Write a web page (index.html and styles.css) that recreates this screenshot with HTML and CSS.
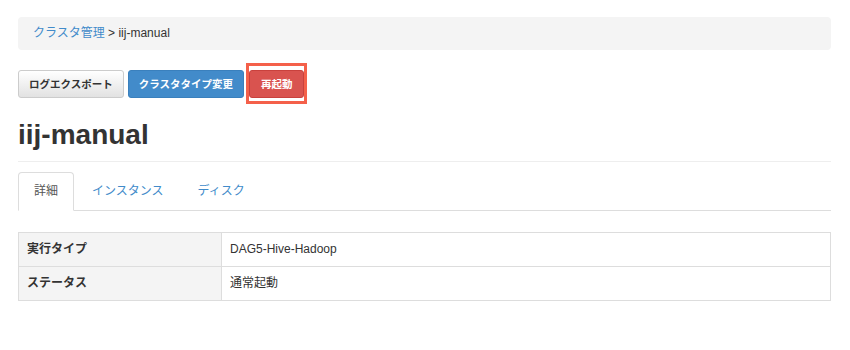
FILE: index.html
```html
<!DOCTYPE html>
<html lang="ja">
<head>
    <meta charset="UTF-8">
    <meta name="viewport" content="width=device-width, initial-scale=1.0">
    <title>iij-manual</title>
    <link rel="stylesheet" href="styles.css">
</head>
<body>
    <div class="page">
        <!-- パンくず -->
        <div class="breadcrumb">
            <a href="#">クラスタ管理</a> &gt; iij-manual
        </div>

        <div class="actions">
            <button class="btn btn-default">ログエクスポート</button>
            <button class="btn btn-primary">クラスタタイプ変更</button>
            <button class="btn btn-danger marked">再起動</button>
        </div>

        <h1 class="page-header">iij-manual</h1>

        <ul class="nav-tabs">
            <li class="active"><a href="#">詳細</a></li>
            <li><a href="#">インスタンス</a></li>
            <li><a href="#">ディスク</a></li>
        </ul>

        <div class="tab-content">
            <table class="detail">
                <tr>
                    <th>実行タイプ</th>
                    <td>DAG5-Hive-Hadoop</td>
                </tr>
                <tr>
                    <th>ステータス</th>
                    <td>通常起動</td>
                </tr>
            </table>
        </div>
    </div>
</body>
</html>
```

FILE: styles.css
```css
/* GLOBAL */
body {
    margin: 0;
    font-family: "Liberation Sans", Arial, "Noto Sans CJK JP", sans-serif;
    font-size: 12px;
    line-height: 1.428571;
    color: #333;
    background-color: #fff;
}

a {
    color: #428bca;
    text-decoration: none;
}

.page {
    margin: 17px 19px 0 18px;
}

/* BREADCRUMB */
.breadcrumb {
    padding: 8px 15px;
    margin-bottom: 20px;
    background-color: #f4f4f4;
    border-radius: 4px;
}

/* BUTTONS */
.actions {
    display: flex;
    align-items: center;
    gap: 4px;
}

.btn {
    font-family: inherit;
    font-size: 10.5px;
    font-weight: bold;
    line-height: 16px;
    padding: 5px 10px;
    border: 1px solid transparent;
    border-radius: 3px;
    cursor: pointer;
}

.btn-default {
    color: #333;
    background-image: linear-gradient(#fff, #e2e2e2);
    border-color: #ccc;
}

.btn-primary {
    color: #fff;
    background-color: #428bca;
    border-color: #3a80bd;
}

.btn-danger {
    color: #fff;
    background-color: #d9534f;
    border-color: #c9413d;
    padding: 5px 11px;
}

/* annotation box around the restart button */
.marked {
    position: relative;
    margin-left: 1px;
}

.marked::after {
    content: "";
    position: absolute;
    top: -8px;
    bottom: -7px;
    left: -4px;
    right: -4px;
    border: 3px solid #f4604a;
}

/* HEADER */
.page-header {
    margin: 22px 0 10px;
    padding-bottom: 10px;
    font-size: 28px;
    font-weight: bold;
    line-height: 1.1;
    color: #333;
    border-bottom: 1px solid #eee;
}

/* TABS */
.nav-tabs {
    display: flex;
    margin: 0;
    padding: 0;
    list-style: none;
    border-bottom: 1px solid #ddd;
}

.nav-tabs li {
    margin-bottom: -1px;
    margin-right: 2px;
}

.nav-tabs a {
    display: block;
    padding: 10px 15px;
    border: 1px solid transparent;
    border-radius: 4px 4px 0 0;
}

.nav-tabs .active a {
    color: #555;
    background-color: #fff;
    border-color: #ddd #ddd transparent;
}

/* TABLE */
.tab-content {
    padding-top: 21px;
}

.detail {
    width: 100%;
    border-collapse: collapse;
    border: 1px solid #ddd;
}

.detail th, .detail td {
    padding: 8px;
    text-align: left;
    border: 1px solid #ddd;
}

.detail th {
    width: 25%;
    background-color: #f4f4f4;
}
```
